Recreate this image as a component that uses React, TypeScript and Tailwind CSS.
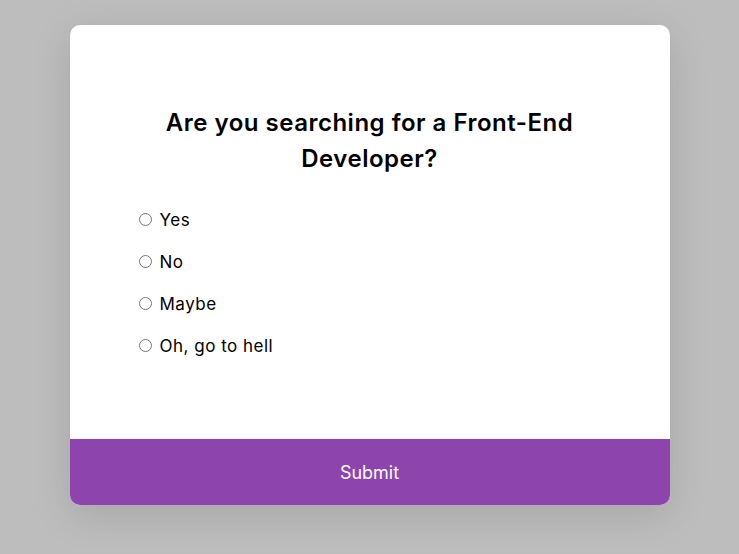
const options = ["Yes", "No", "Maybe", "Oh, go to hell"];

const App = () => {
  return (
    <div className="min-h-screen bg-[#bdbdbd] pt-[25px] font-['Inter',sans-serif]">
      <div className="mx-auto w-[600px] overflow-hidden rounded-[10px] bg-white shadow-[0_10px_40px_rgba(0,0,0,0.12)]">
        <div className="h-[414px] px-[69px] pt-[80px]">
          <h2 className="mx-auto w-[440px] text-center text-[24px] font-semibold leading-[36px] tracking-[0.5px] text-black">
            Are you searching for a Front-End Developer?
          </h2>
          <ul className="mt-[29px] flex flex-col gap-[12px]">
            {options.map((opt) => (
              <li key={opt} className="flex h-[30px] items-center">
                <input
                  type="radio"
                  name="answer"
                  className="m-0 mb-[4px] h-[13px] w-[13px]"
                />
                <label className="ml-[8px] text-[17px] tracking-[0.5px] text-black">{opt}</label>
              </li>
            ))}
          </ul>
        </div>
        <button className="h-[66px] w-full bg-[#8e44ad] text-[18px] text-white">
          Submit
        </button>
      </div>
    </div>
  );
};

export default App;
